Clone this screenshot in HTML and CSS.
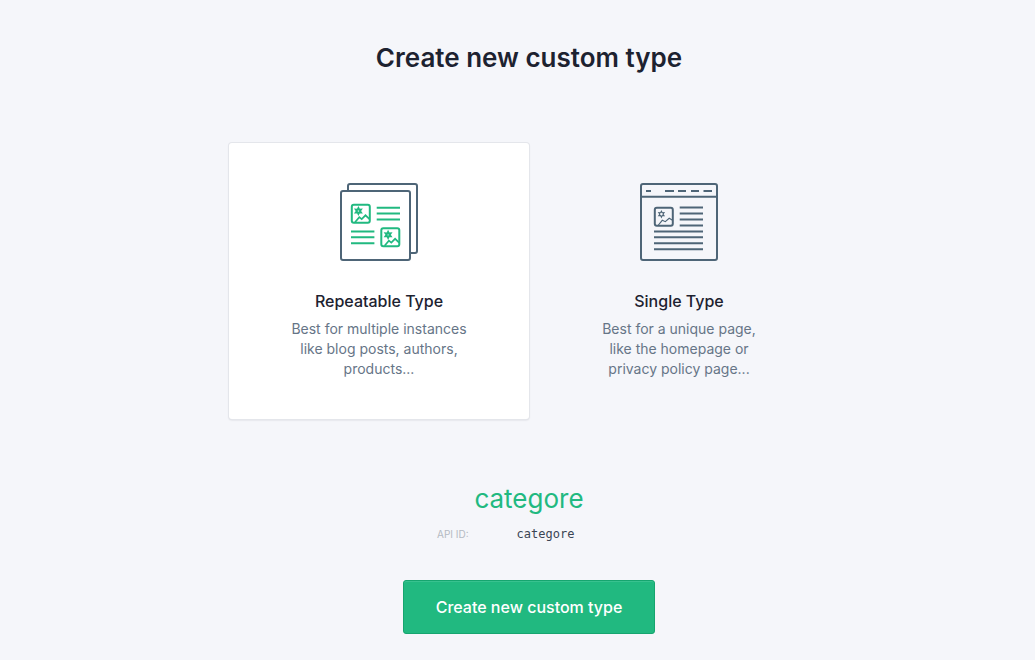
FILE: index.html
```html
<!DOCTYPE html>
<html lang="en">
<head>
<meta charset="utf-8">
<title>Create new custom type</title>
<link rel="stylesheet" href="styles.css">
</head>
<body>
<main class="page">
  <form class="form">
    <h1 class="title">Create new custom type</h1>
    <div class="types" role="radiogroup" aria-label="Kind of custom type">
      <label class="type">
        <input class="type-radio" type="radio" name="kind" value="repeatable" checked>
        <svg class="type-icon" viewBox="0 0 78 78" aria-hidden="true">
          <path d="M8 7V3a2 2 0 0 1 2-2h65a2 2 0 0 1 2 2v65a2 2 0 0 1-2 2h-4"/>
          <rect x="1" y="8" width="69" height="69" rx="2"/>
          <g class="accent">
            <rect x="11.8" y="21.7" width="18" height="18" rx="2"/>
            <path class="fine" d="M15 39.3l4.3-5.2 2.4 2 3.8-3.8 4 3.8"/>
            <path class="star" d="M18.4 25l.8 1.6 1.8-.1-1 1.5 1 1.5-1.8-.1-.8 1.6-.8-1.6-1.8.1 1-1.5-1-1.5 1.8.1z"/>
            <path d="M36.7 24.7H60M36.7 30.5H60M36.7 36.4H60M11 48.4h23.4M11 54.3h23.4M11 60.2h23.4"/>
            <rect x="41.3" y="45.3" width="18" height="18" rx="2"/>
            <path class="fine" d="M44.6 62.8l4.3-5.2 2.4 2 3.8-3.8 4 3.8"/>
            <path class="star" d="M48.1 48.8l.8 1.6 1.8-.1-1 1.5 1 1.5-1.8-.1-.8 1.6-.8-1.6-1.8.1 1-1.5-1-1.5 1.8.1z"/>
          </g>
        </svg>
        <span class="type-name">Repeatable Type</span>
        <span class="type-text">Best for multiple instances like blog posts, authors, products...</span>
      </label>
      <label class="type">
        <input class="type-radio" type="radio" name="kind" value="single">
        <svg class="type-icon" viewBox="0 0 78 78" aria-hidden="true">
          <rect x="1" y="1" width="76" height="76" rx="2"/>
          <path d="M1 13.8h76M6 8h5M25 8h9M38 8h8M51 8h8M63.5 8h8.5"/>
          <rect x="14.8" y="24.8" width="18" height="18" rx="2"/>
          <path class="thin" d="M18 42.5l4.3-5.2 3 1.4 3.9-3.4 3.3 2"/>
          <path class="thin" d="M21.4 28.2l.8 1.6 1.8-.1-1 1.5 1 1.5-1.8-.1-.8 1.6-.8-1.6-1.8.1 1-1.5-1-1.5 1.8.1z"/>
          <path d="M39.7 24.6H63M39.7 30.5H63M39.7 36.5H63M39.7 42.4H63M14 48.4h49M14 54.3h49M14 60.3h49M14 66.2h49"/>
        </svg>
        <span class="type-name">Single Type</span>
        <span class="type-text">Best for a unique page, like the homepage or privacy policy page...</span>
      </label>
    </div>
    <input class="name-input" type="text" aria-label="Custom type name" value="categore">
    <div class="api">
      <label class="api-label" for="api-id">API ID:</label>
      <input class="api-input" id="api-id" type="text" value="categore">
    </div>
    <button class="submit" type="button">Create new custom type</button>
  </form>
</main>
</body>
</html>
```

FILE: styles.css
```css
* {
  box-sizing: border-box;
}

body {
  margin: 0;
  background: #f5f6fa;
  color: #1d2230;
  font-family: Inter, "Liberation Sans", sans-serif;
}

.page {
  padding: 40px 0 24px 23px;
}

.form {
  display: flex;
  flex-direction: column;
  align-items: center;
}

.title {
  margin: 0 0 67px;
  font-size: 26px;
  line-height: 36px;
  font-weight: 600;
}

.types {
  display: grid;
  grid-template-columns: repeat(2, minmax(0, 300px));
  justify-content: center;
  width: 100%;
}

.type {
  position: relative;
  display: flex;
  flex-direction: column;
  align-items: center;
  padding: 40px 61px;
  border-radius: 3px;
  text-align: center;
  cursor: pointer;
}

.type:has(:checked) {
  background: #fff;
  box-shadow: 0 0 0 1px #e4e6eb, 0 1px 2px rgba(30, 35, 50, 0.2);
}

.type-radio {
  position: absolute;
  opacity: 0;
}

.type-icon {
  width: 78px;
  height: 78px;
  margin-bottom: 30px;
  fill: none;
  stroke: #4e6577;
  stroke-width: 2;
}

.accent {
  stroke: #21b980;
}

.fine {
  stroke-width: 1.7;
}

.star {
  stroke-width: 1.9;
}

.thin {
  stroke-width: 1.1;
}

.type-name {
  margin-bottom: 8px;
  font-size: 16px;
  line-height: 20px;
  font-weight: 500;
}

.type-text {
  color: #667587;
  font-size: 14px;
  line-height: 20px;
}

.name-input {
  width: 300px;
  height: 40px;
  margin-top: 60px;
  padding: 0;
  border: 0;
  background: transparent;
  color: #21b980;
  font: 400 26px/40px Inter, sans-serif;
  text-align: center;
}

.api {
  display: flex;
  align-items: center;
  gap: 48px;
  width: 184px;
  height: 20px;
  margin: 5px 0 36px;
}

.api-label {
  flex: none;
  color: #b4bac2;
  font-size: 10px;
}

.api-input {
  flex: 1;
  min-width: 0;
  padding: 0;
  border: 0;
  background: transparent;
  color: #3b4554;
  font: 12px/20px "DejaVu Sans Mono", monospace;
}

.submit {
  height: 54px;
  padding: 0 32px;
  border: 1px solid #16a56f;
  border-radius: 3px;
  background: #21b980;
  box-shadow: inset 0 1px 0 #38c28f;
  color: #fff;
  font: 500 16px/20px Inter, sans-serif;
  cursor: pointer;
}
```
